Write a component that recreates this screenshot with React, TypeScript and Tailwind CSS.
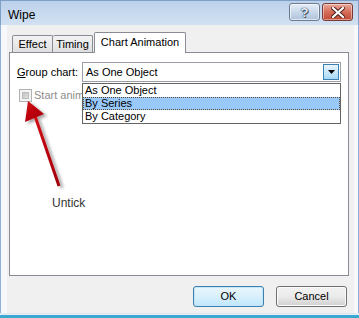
import React from "react";

function HelpButton() {
  return (
    <div className="w-[31px] h-[18px] rounded-[3px] border border-[#6b7c92] bg-gradient-to-b from-[#e4edf7] via-[#c9d8ea] to-[#aec3dc] flex items-center justify-center shadow-[inset_0_0_0_1px_rgba(255,255,255,0.6)]">
      <span className="text-[13px] font-bold leading-none text-[#e8eef6] [text-shadow:0_0_1px_#2a3b52,0_0_1px_#2a3b52,1px_1px_0_#4a5b72]">?</span>
    </div>
  );
}

function CloseButton() {
  return (
    <div className="w-[31px] h-[18px] rounded-[3px] border border-[#7a3a33] bg-gradient-to-b from-[#e8aa9c] via-[#d56b58] to-[#c04a36] flex items-center justify-center shadow-[inset_0_0_0_1px_rgba(255,255,255,0.45)]">
      <svg width="14" height="11" viewBox="0 0 14 11">
        <path d="M2 1 L12 10 M12 1 L2 10" stroke="#4a1c16" strokeWidth="4" strokeLinecap="square" />
        <path d="M2 1 L12 10 M12 1 L2 10" stroke="#ffffff" strokeWidth="2.2" strokeLinecap="square" />
      </svg>
    </div>
  );
}

export default function App() {
  return (
    <div
      className="relative w-[359px] h-[318px] overflow-hidden bg-[#f0f0f0] flex flex-col text-[11px] text-black"
      style={{ fontFamily: '"Liberation Sans", Arial, sans-serif' }}
    >
      {/* Title bar */}
      <div className="h-[25px] shrink-0 flex items-start bg-gradient-to-b from-[#bcd1ea] to-[#d2e1f2] border-t border-x border-[#7f9fc6] pl-[7px] pr-[5px]">
        <span className="mt-[5px] text-[12px] text-black">Wipe</span>
        <div className="ml-auto mt-[2px] flex gap-[2px]">
          <HelpButton />
          <CloseButton />
        </div>
      </div>

      {/* Body */}
      <div className="flex-1 flex flex-col border-x border-[#8fb2da] pl-[8px] pr-[9px] pt-[7px] shadow-[inset_6px_0_0_#f6f8fb,inset_-4px_0_0_#f6f8fb]">
        {/* Tabs */}
        <div className="relative z-10 h-[21px] flex items-end pl-[3px]">
          <div className="mb-[1px] w-[41px] h-[17px] border-t border-l border-r border-[#898c95] rounded-t-[2px] bg-gradient-to-b from-[#f3f3f3] to-[#e0e0e0] flex items-center justify-center">
            Effect
          </div>
          <div className="mb-[1px] w-[40px] h-[17px] border-t border-r border-[#898c95] rounded-t-[2px] bg-gradient-to-b from-[#f3f3f3] to-[#e0e0e0] flex items-center justify-center">
            Timing
          </div>
          <div className="ml-[1px] w-[92px] h-[21px] border-t border-l border-r border-[#898c95] rounded-t-[2px] bg-white flex items-center justify-center pb-[1px]">
            Chart Animation
          </div>
        </div>

        {/* Panel */}
        <div className="-mt-[1px] w-[340px] h-[224px] border border-[#898c95] bg-white pt-[9px] pl-[7px]">
          <div className="flex items-center">
            <span className="w-[65px]">
              <span className="underline">G</span>roup chart:
            </span>
            <div className="relative w-[259px] h-[20px] border border-[#9a9ea6] bg-white flex items-center pl-[3px]">
              <span>As One Object</span>
              <div className="absolute right-[1px] top-[1px] w-[16px] h-[16px] border border-[#3c7fb1] bg-gradient-to-b from-[#eaf6fd] to-[#a7d9f5] flex items-center justify-center">
                <svg width="7" height="4" viewBox="0 0 7 4">
                  <path d="M0 0 H7 L3.5 4 Z" fill="#000" />
                </svg>
              </div>
              {/* Dropdown list */}
              <div className="absolute z-20 left-[-1px] top-[20px] w-[259px] h-[41px] border border-[#646464] bg-white">
                <div className="h-[13px] leading-[13px] pl-[2px]">As One Object</div>
                <div className="h-[13px] leading-[11px] pl-[1px] bg-[#99c9fb] border border-dotted border-[#5c4a36]">By Series</div>
                <div className="h-[13px] leading-[13px] pl-[2px]">By Category</div>
              </div>
            </div>
          </div>
          <div className="mt-[5px] ml-[2px] flex items-center gap-[2px]">
            <div className="w-[13px] h-[13px] border border-[#b2b2b2] bg-[#f4f4f4] p-[2px]">
              <div className="w-full h-full bg-gradient-to-br from-[#c4c4c4] to-[#dedede] border border-[#bdbdbd]" />
            </div>
            <div className="w-[48px] overflow-hidden">
              <span className="text-[#8d8d8d] whitespace-nowrap">Start animation by drawing the chart background</span>
            </div>
          </div>
        </div>

        {/* Buttons */}
        <div className="mt-[10px] flex justify-end gap-[12px] pr-[2px]">
          <div className="w-[71px] h-[21px] rounded-[3px] border border-[#3c7fb1] bg-gradient-to-b from-[#eaf6fd] via-[#d9f0fc] to-[#bee6fd] flex items-center justify-center shadow-[inset_0_0_0_1px_#c6e6f8]">
            OK
          </div>
          <div className="w-[71px] h-[21px] rounded-[3px] border border-[#707070] bg-gradient-to-b from-[#f2f2f2] via-[#ebebeb] to-[#d0d0d0] flex items-center justify-center shadow-[inset_0_0_0_1px_#fbfbfb]">
            Cancel
          </div>
        </div>
      </div>

      {/* Bottom frame */}
      <div className="h-[5px] shrink-0 border-t border-[#dde6f0] bg-[#e9eff6] border-b-[3px] border-b-[#3aa8cf]" />

      {/* Annotation: "Untick" label */}
      <div className="absolute left-[52px] top-[194px] text-[12px] text-[#333333]">Untick</div>

      {/* Annotation arrow + cursor overlay */}
      <svg className="absolute left-0 top-0 pointer-events-none" width="359" height="318" viewBox="0 0 359 318">
        <defs>
          <filter id="sh" x="-50%" y="-50%" width="200%" height="200%">
            <feDropShadow dx="3" dy="2" stdDeviation="1.8" floodColor="#000" floodOpacity="0.35" />
          </filter>
          <linearGradient id="rg" x1="0" y1="0" x2="1" y2="1">
            <stop offset="0" stopColor="#d10a14" />
            <stop offset="1" stopColor="#a3000a" />
          </linearGradient>
        </defs>
        <g filter="url(#sh)">
          <line x1="59" y1="186" x2="35" y2="116" stroke="url(#rg)" strokeWidth="3" />
          <polygon points="28,101 44,114 25,122" fill="url(#rg)" />
        </g>
        {/* mouse cursor */}
        <g transform="translate(291.5,100.5)">
          <path d="M0 0 L0 17 L4 13 L7 20 L10 19 L7 12 L12 12 Z" fill="#ffffff" stroke="#000000" strokeWidth="1" strokeLinejoin="miter" />
        </g>
      </svg>
    </div>
  );
}
